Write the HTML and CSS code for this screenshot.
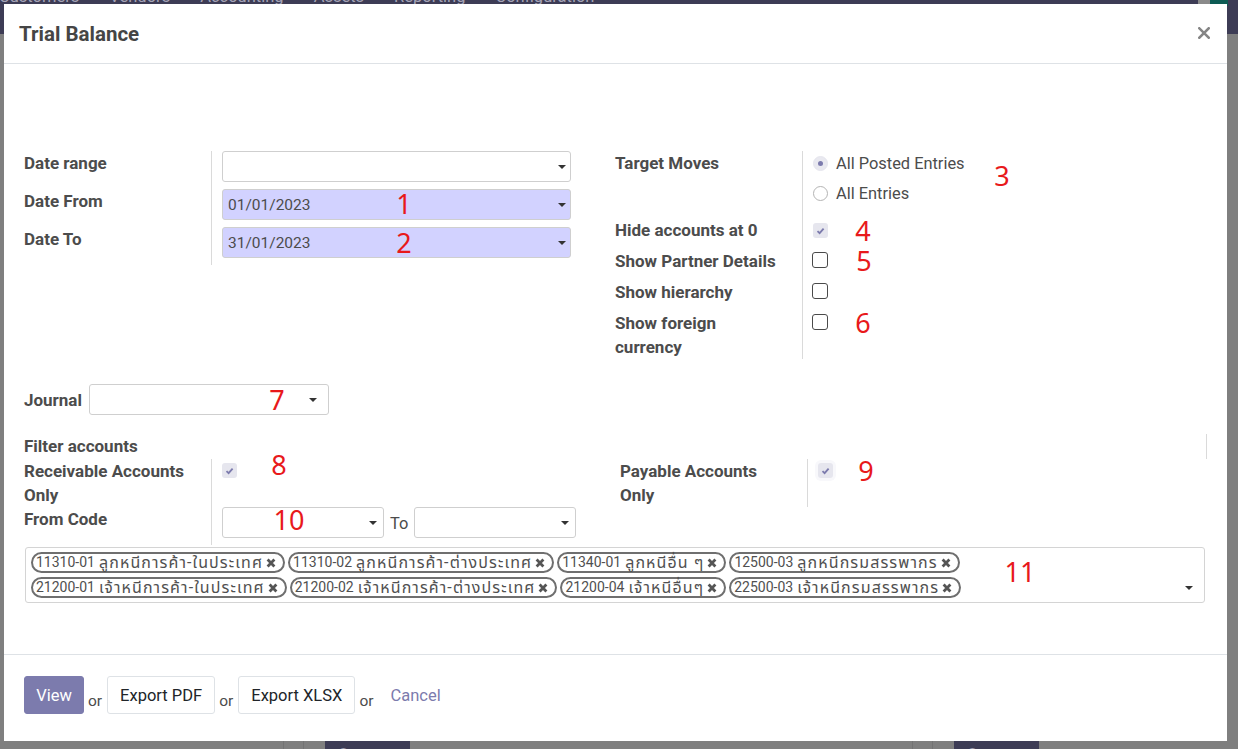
FILE: index.html
```html
<!DOCTYPE html>
<html lang="en">
<head>
<meta charset="utf-8">
<title>Trial Balance</title>
<link rel="stylesheet" href="styles.css">
</head>
<body>
<div class="page">
  <nav class="topbar">
    <span>Customers</span><span>Vendors</span><span>Accounting</span><span>Assets</span><span>Reporting</span><span>Configuration</span>
    <span class="topbar-fill"></span>
    <span class="topbar-grey"></span><span class="topbar-teal"></span>
  </nav>
  <div class="page-main">
    <div class="pcol"></div>
    <div class="pgap"></div>
    <div class="pcol"><span class="connect">Connect</span></div>
    <div class="pgap"></div>
    <div class="pcol"><span class="connect">Connect</span></div>
  </div>
</div>

<div class="modal">
  <header class="modal-header">
    <h4 class="modal-title">Trial Balance</h4>
    <button class="close" aria-label="Close">
      <svg width="12" height="12" viewBox="0 0 12 12"><path d="M1.3 1.3 L10.7 10.7 M10.7 1.3 L1.3 10.7" stroke="#858585" stroke-width="2.6" stroke-linecap="square"/></svg>
    </button>
  </header>

  <div class="modal-body">
    <div class="two-col">
      <div class="group">
        <div class="lbl">Date range</div>
        <div class="val"><div class="field wide"><span></span><i class="caret"></i></div></div>
        <div class="lbl">Date From</div>
        <div class="val"><div class="field wide req"><span>01/01/2023</span><i class="caret"></i></div></div>
        <div class="lbl">Date To</div>
        <div class="val"><div class="field wide req"><span>31/01/2023</span><i class="caret"></i></div></div>
      </div>
      <div class="group">
        <div class="lbl">Target Moves</div>
        <div class="val radios">
          <div class="radio-item"><span class="radio on"></span><span>All Posted Entries</span></div>
          <div class="radio-item"><span class="radio"></span><span>All Entries</span></div>
        </div>
        <div class="lbl">Hide accounts at 0</div>
        <div class="val"><span class="chk on"><svg width="9" height="8" viewBox="0 0 9 8"><path d="M1.5 4.2 L3.6 6.2 L7.6 1.6" fill="none" stroke="#7c7bad" stroke-width="1.8"/></svg></span></div>
        <div class="lbl">Show Partner Details</div>
        <div class="val"><span class="chk"></span></div>
        <div class="lbl">Show hierarchy</div>
        <div class="val"><span class="chk"></span></div>
        <div class="lbl">Show foreign<br>currency</div>
        <div class="val last"><span class="chk"></span></div>
      </div>
    </div>

    <div class="journal-row">
      <div class="lbl">Journal</div>
      <div class="field journal"><span></span><i class="caret"></i></div>
    </div>

    <div class="filter-row">
      <div class="lbl">Filter accounts</div>
      <div class="vline"></div>
    </div>

    <div class="two-col second">
      <div class="group">
        <div class="lbl">Receivable Accounts<br>Only</div>
        <div class="val tall"><span class="chk on sm"><svg width="9" height="8" viewBox="0 0 9 8"><path d="M1.5 4.2 L3.6 6.2 L7.6 1.6" fill="none" stroke="#7c7bad" stroke-width="1.8"/></svg></span></div>
        <div class="lbl">From Code</div>
        <div class="val code-row">
          <div class="field code"><span></span><i class="caret"></i></div>
          <span class="to">To</span>
          <div class="field code"><span></span><i class="caret"></i></div>
        </div>
      </div>
      <div class="group">
        <div class="lbl">Payable Accounts<br>Only</div>
        <div class="val tall"><span class="chk on sm halo"><svg width="9" height="8" viewBox="0 0 9 8"><path d="M1.5 4.2 L3.6 6.2 L7.6 1.6" fill="none" stroke="#7c7bad" stroke-width="1.8"/></svg></span></div>
      </div>
    </div>

    <div class="tags-box">
      <div class="tag-rows">
        <div class="tag-row">
          <span class="tag">11310-01 <span class="th">ลูกหนีการค้า-ในประเทศ</span><svg class="x" width="10" height="10" viewBox="0 0 10 10"><path d="M1.6 1.6 L8.4 8.4 M8.4 1.6 L1.6 8.4" stroke="#555" stroke-width="2.8"/></svg></span>
          <span class="tag">11310-02 <span class="th">ลูกหนีการค้า-ต่างประเทศ</span><svg class="x" width="10" height="10" viewBox="0 0 10 10"><path d="M1.6 1.6 L8.4 8.4 M8.4 1.6 L1.6 8.4" stroke="#555" stroke-width="2.8"/></svg></span>
          <span class="tag">11340-01 <span class="th">ลูกหนีอื่น ๆ</span><svg class="x" width="10" height="10" viewBox="0 0 10 10"><path d="M1.6 1.6 L8.4 8.4 M8.4 1.6 L1.6 8.4" stroke="#555" stroke-width="2.8"/></svg></span>
          <span class="tag">12500-03 <span class="th">ลูกหนีกรมสรรพากร</span><svg class="x" width="10" height="10" viewBox="0 0 10 10"><path d="M1.6 1.6 L8.4 8.4 M8.4 1.6 L1.6 8.4" stroke="#555" stroke-width="2.8"/></svg></span>
        </div>
        <div class="tag-row">
          <span class="tag">21200-01 <span class="th">เจ้าหนีการค้า-ในประเทศ</span><svg class="x" width="10" height="10" viewBox="0 0 10 10"><path d="M1.6 1.6 L8.4 8.4 M8.4 1.6 L1.6 8.4" stroke="#555" stroke-width="2.8"/></svg></span>
          <span class="tag">21200-02 <span class="th">เจ้าหนีการค้า-ต่างประเทศ</span><svg class="x" width="10" height="10" viewBox="0 0 10 10"><path d="M1.6 1.6 L8.4 8.4 M8.4 1.6 L1.6 8.4" stroke="#555" stroke-width="2.8"/></svg></span>
          <span class="tag">21200-04 <span class="th">เจ้าหนีอื่นๆ</span><svg class="x" width="10" height="10" viewBox="0 0 10 10"><path d="M1.6 1.6 L8.4 8.4 M8.4 1.6 L1.6 8.4" stroke="#555" stroke-width="2.8"/></svg></span>
          <span class="tag">22500-03 <span class="th">เจ้าหนีกรมสรรพากร</span><svg class="x" width="10" height="10" viewBox="0 0 10 10"><path d="M1.6 1.6 L8.4 8.4 M8.4 1.6 L1.6 8.4" stroke="#555" stroke-width="2.8"/></svg></span>
        </div>
      </div>
      <i class="caret tags-caret"></i>
    </div>
  </div>

  <footer class="modal-footer">
    <button class="btn primary">View</button>
    <span class="or">or</span>
    <button class="btn secondary">Export PDF</button>
    <span class="or">or</span>
    <button class="btn secondary">Export XLSX</button>
    <span class="or">or</span>
    <button class="btn link">Cancel</button>
  </footer>

  <div class="annot n1">1</div>
  <div class="annot n2">2</div>
  <div class="annot n3">3</div>
  <div class="annot n4">4</div>
  <div class="annot n5">5</div>
  <div class="annot n6">6</div>
  <div class="annot n7">7</div>
  <div class="annot n8">8</div>
  <div class="annot n9">9</div>
  <div class="annot n10">10</div>
  <div class="annot n11">11</div>
</div>
</body>
</html>
```

FILE: styles.css
```css
* { box-sizing: border-box; }
html, body { margin: 0; padding: 0; }
body {
  width: 1238px;
  height: 749px;
  overflow: hidden;
  background: #7f7f7f;
  font-family: Roboto, "Noto Sans Thai", "Noto Sans Thai UI", "Noto Sans", sans-serif;
}

/* ---------- background page (under backdrop) ---------- */
.page { height: 749px; display: flex; flex-direction: column; }
.topbar {
  height: 34px;
  flex: none;
  background: #3d3c55;
  display: flex;
  gap: 30px;
  color: #a4a3b6;
  font-size: 16.5px;
  line-height: 16px;
  overflow: hidden;
}
.topbar span { margin-top: -11px; }
.topbar span:first-child { margin-left: -1px; }
.topbar .topbar-fill { flex: 1; }
.topbar .topbar-grey { margin: 0 -30px 0 0; width: 12px; height: 6px; background: #8a8a8a; }
.topbar .topbar-teal { margin: 0 10px 0 0; width: 18px; height: 6px; background: #0d5b54; }
.page-main {
  flex: 1;
  display: grid;
  grid-template-columns: 283px 21px 608px 21px 1fr;
}
.pgap { border-left: 1px solid #737373; border-right: 1px solid #737373; }
.pcol { padding: 707px 0 0 21px; }
.connect {
  display: inline-block;
  width: 85px;
  height: 30px;
  background: #3d3c55;
  color: #9897aa;
  font-size: 16px;
  text-align: center;
  line-height: 28px;
}

/* ---------- modal ---------- */
.modal {
  position: fixed;
  left: 4px;
  top: 4px;
  width: 1223px;
  height: 737px;
  background: #fff;
  display: flex;
  flex-direction: column;
  color: #4c4c4c;
}
.modal-header {
  height: 60px;
  flex: none;
  display: flex;
  align-items: center;
  justify-content: space-between;
  padding: 2px 17px 0 15px;
  border-bottom: 1px solid #dee2e6;
}
.modal-title {
  margin: 0;
  font-size: 20.5px;
  line-height: 29px;
  font-weight: 700;
  color: #454545;
}
.close {
  background: none;
  border: 0;
  padding: 0;
  width: 12px;
  height: 12px;
  display: flex;
  margin-top: -4px;
}

.modal-body {
  flex: 1;
  padding: 87px 20px 0 20px;
}

.lbl {
  font-size: 17px;
  font-weight: 700;
  line-height: 24px;
  white-space: nowrap;
  color: #4c4c4c;
}

.two-col {
  display: grid;
  grid-template-columns: 567px 1fr;
  column-gap: 24px;
}
.two-col.second { grid-template-columns: 572px 1fr; }

.group {
  display: grid;
  grid-template-columns: 187px 1fr;
  align-content: start;
}
.val {
  border-left: 1px solid #dadada;
  padding: 0 0 7px 10px;
  min-height: 31px;
  font-size: 16.4px;
}
.val.last { padding-bottom: 0; min-height: 0; }
.val.tall { height: 48px; padding: 4px 0 0 10px; }

.field {
  height: 31px;
  border: 1px solid #cfcfcf;
  border-radius: 3px;
  display: flex;
  align-items: center;
  justify-content: space-between;
  padding: 0 4px 0 5px;
  font-size: 15.5px;
  color: #4c4c4c;
  background: #fff;
}
.field.wide { width: 349px; }
.field.req { background: #d2d2ff; }
.field.journal { width: 240px; margin-left: 7px; padding-right: 11px; }
.field.code { width: 162px; padding-right: 6px; }
.caret {
  display: block;
  width: 0;
  height: 0;
  border-left: 4.5px solid transparent;
  border-right: 4.5px solid transparent;
  border-top: 4.5px solid #333;
  margin-top: 1px;
}

.radios { padding-bottom: 7px; }
.radio-item {
  height: 24px;
  margin-bottom: 6px;
  display: flex;
  align-items: center;
  gap: 8px;
  color: #4c4c4c;
}
.radio {
  width: 15px;
  height: 15px;
  border-radius: 50%;
  border: 1px solid #b4b4b4;
  background: #fff;
  display: flex;
  align-items: center;
  justify-content: center;
}
.radio.on { border-color: #e6e6ee; background: #e9e9f0; }
.radio.on::after {
  content: "";
  width: 5px;
  height: 5px;
  border-radius: 50%;
  background: #7c7bad;
}

.chk {
  display: flex;
  align-items: center;
  justify-content: center;
  width: 16px;
  height: 16px;
  margin-top: 3px;
  margin-left: -1px;
  border: 1.6px solid #4a4a4a;
  border-radius: 3px;
  background: #fff;
}
.chk.on {
  width: 15px;
  height: 15px;
  margin-top: 5px;
  margin-left: 0;
  border: 0;
  background: #e6e6ee;
}
.chk.on.sm { margin-top: 0; }
.chk.halo { box-shadow: 0 0 0 3px #f8f8fb; }

.journal-row {
  margin-top: 25px;
  display: flex;
  align-items: center;
  height: 31px;
}

.filter-row {
  margin-top: 19px;
  display: flex;
  height: 25px;
}
.filter-row .lbl { flex: 1; }
.vline { width: 1px; border-left: 1px solid #dadada; }

.code-row { display: flex; align-items: center; align-self: start; }
.to { margin: 2px 6px 0 6px; color: #4c4c4c; }

.tags-box {
  margin: 2px 2px 0 1px;
  height: 56px;
  border: 1px solid #d4d4d4;
  border-radius: 3px;
  padding: 4px 11px 0 5px;
  display: flex;
  justify-content: space-between;
}
.tag-rows { display: flex; flex-direction: column; gap: 4px; }
.tag-row { display: flex; gap: 3px; }
.tag {
  height: 21px;
  display: inline-flex;
  align-items: center;
  border: 2px solid #6f6f6f;
  border-radius: 11px;
  padding: 0 7px 0 3px;
  font-size: 14px;
  line-height: 17px;
  color: #505050;
  white-space: nowrap;
}
.tag .th { font-size: 16px; letter-spacing: 1.1px; margin-left: 4px; }
.tag .x { margin-left: 3px; flex: none; }
.tags-caret { align-self: flex-end; margin-bottom: 12px; }

.modal-footer {
  height: 87px;
  flex: none;
  border-top: 1px solid #dee2e6;
  padding: 21px 20px 0 20px;
  display: flex;
  align-items: flex-start;
}
.btn {
  height: 38px;
  font-family: inherit;
  font-size: 16.5px;
  padding: 0 12px;
  border-radius: 3px;
  cursor: pointer;
}
.btn.primary { background: #7c7bad; border: 1px solid #7c7bad; color: #fff; width: 60px; padding: 0; }
.btn.secondary { background: #fff; border: 1px solid #dee2e6; color: #212529; }
.btn.link { background: none; border: 0; color: #7c7bad; padding: 0 12px; }
.or { font-size: 15.5px; color: #4c4c4c; margin: 13px 5px 0 4px; line-height: 24px; }

/* ---------- red annotations ---------- */
.annot {
  position: absolute;
  font-family: "Noto Sans", "DejaVu Sans", sans-serif;
  font-size: 27px;
  line-height: 1;
  color: #e8191b;
  transform: translate(-50%, -50%);
}
.n1 { left: 400px; top: 199px; }
.n2 { left: 400px; top: 238px; }
.n3 { left: 998px; top: 171px; }
.n4 { left: 859px; top: 226px; }
.n5 { left: 860px; top: 256px; }
.n6 { left: 859px; top: 318px; }
.n7 { left: 273px; top: 395px; }
.n8 { left: 275px; top: 460px; }
.n9 { left: 862px; top: 466px; }
.n10 { left: 285px; top: 515px; }
.n11 { left: 1016px; top: 567px; }
```
